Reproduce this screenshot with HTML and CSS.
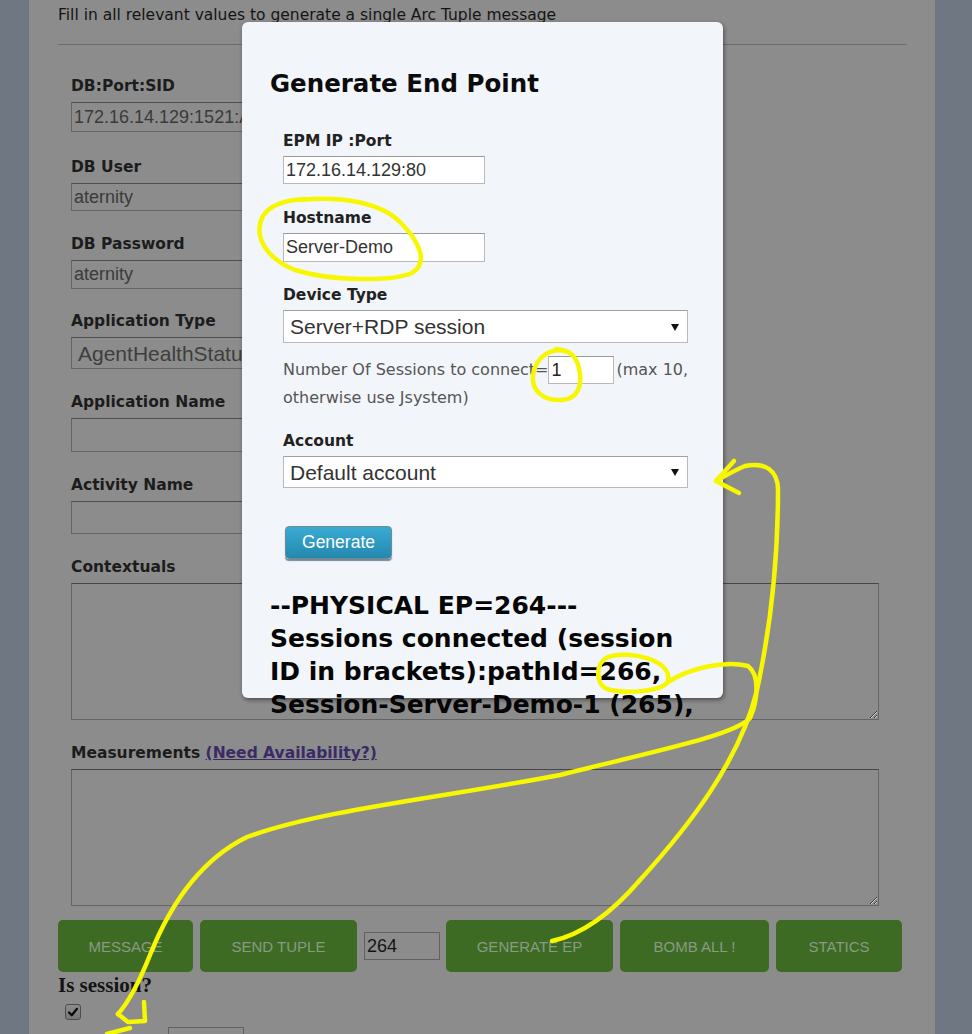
FILE: index.html
```html
<!DOCTYPE html>
<html lang="en">
<head>
<meta charset="utf-8">
<title>Arc Tuple</title>
<link rel="stylesheet" href="styles.css">
</head>
<body>
<div class="page">
  <p class="intro">Fill in all relevant values to generate a single Arc Tuple message</p>
  <hr class="rule">
  <form class="tuple-form">
    <div class="field">
      <label class="field-label">DB:Port:SID</label>
      <input class="text-input" value="172.16.14.129:1521:AGENT">
    </div>
    <div class="field f-user">
      <label class="field-label">DB User</label>
      <input class="text-input h28" value="aternity">
    </div>
    <div class="field">
      <label class="field-label">DB Password</label>
      <input class="text-input h29" value="aternity">
    </div>
    <div class="field f-type">
      <label class="field-label">Application Type</label>
      <select class="page-select"><option>AgentHealthStatus</option></select>
    </div>
    <div class="field">
      <label class="field-label">Application Name</label>
      <input class="text-input h34" value="">
    </div>
    <div class="field">
      <label class="field-label">Activity Name</label>
      <input class="text-input h33" value="">
    </div>
    <div class="field">
      <label class="field-label">Contextuals</label>
      <textarea class="text-area"></textarea>
    </div>
    <div class="field">
      <label class="field-label">Measurements <a class="link" href="#">(Need Availability?)</a></label>
      <textarea class="text-area"></textarea>
    </div>
  </form>
  <div class="actions">
    <button class="act-btn w-message" type="button">Message</button>
    <button class="act-btn w-send" type="button">Send Tuple</button>
    <input class="ep-input" value="264">
    <button class="act-btn w-gen" type="button">Generate EP</button>
    <button class="act-btn w-bomb" type="button">Bomb All !</button>
    <button class="act-btn w-stat" type="button">Statics</button>
  </div>
  <div class="session-label">Is session?</div>
  <span class="checkbox"><svg width="14" height="14" viewBox="0 0 14 14"><path d="M3 7.5 L5.8 10.3 L11 3.8" fill="none" stroke="#0a0a0a" stroke-width="2.2" stroke-linecap="round" stroke-linejoin="round"/></svg></span>
  <input class="session-input" value="">
</div>

<div class="modal">
  <h2 class="modal-title">Generate End Point</h2>
  <div class="modal-form">
    <div class="m-field">
      <label class="m-label">EPM IP :Port</label>
      <input class="m-input" value="172.16.14.129:80">
    </div>
    <div class="m-field">
      <label class="m-label">Hostname</label>
      <input class="m-input m-h29" value="Server-Demo">
    </div>
    <div class="m-field device">
      <label class="m-label">Device Type</label>
      <div class="select-wrap"><select class="m-select m-h33"><option>Server+RDP session</option></select></div>
    </div>
    <p class="sessions">Number Of Sessions to connect=<input class="num-input" value="1">(max 10,<br>otherwise use Jsystem)</p>
    <div class="m-field account">
      <label class="m-label">Account</label>
      <div class="select-wrap"><select class="m-select"><option>Default account</option></select></div>
    </div>
    <button class="gen-btn" type="button">Generate</button>
  </div>
  <div class="result">--PHYSICAL EP=264---<br>Sessions connected (session<br>ID in brackets):pathId=266,<br>Session-Server-Demo-1 (265),</div>
</div>

<svg class="annotations" width="972" height="1034" viewBox="0 0 972 1034">
  <g fill="none" stroke="#f7f700" stroke-width="4.5" stroke-linecap="round" stroke-linejoin="round">
    <path d="M300 200 C340 196 380 202 400 222 C418 240 430 262 412 273 C390 282 330 281 295 270 C265 258 253 235 263 216 C270 205 285 200 305 199"/>
    <path d="M568 352 C552 346 536 356 533 375 C531 392 545 401 562 400 C578 399 583 385 579 368 C576 356 570 350 556 349"/>
    <path d="M668 680 C672 660 630 650 608 657 C595 663 595 684 607 689 C625 694 660 692 668 682 C690 668 725 660 748 666 C760 675 758 700 750 718 C735 735 660 750 560 775 C440 798 320 810 247 837 C200 860 170 905 150 955 C138 985 126 1005 118 1014"/>
    <path d="M118 1014 L128 1022 L145 1021 L144 1002"/>
    <path d="M107 1034 L130 1028"/>
    <path d="M552 941 C580 935 610 915 640 880 C690 825 740 760 757 690 C770 630 778 560 778 490 C778 470 765 462 745 466 C735 470 725 476 716 481"/>
    <path d="M734 461 L716 481 L739 493"/>
  </g>
</svg>
</body>
</html>
```

FILE: styles.css
```css
/* The page behind the dialog is drawn in its dimmed (backdrop) palette. */

html, body {
  margin: 0;
  height: 100%;
  overflow: hidden;
}

body {
  position: relative;
  background: #6f7782;
  font-family: "DejaVu Sans", Verdana, sans-serif;
  color: #1c1c1c;
}

.page {
  margin-left: 29px;
  width: 906px;
  min-height: 1100px;
  box-sizing: border-box;
  padding: 5px 28px 0 29px;
  background: #8c8c8c;
}

.intro {
  margin: 0;
  font-size: 15.5px;
  line-height: 20px;
  color: #141414;
}

.rule {
  height: 0;
  border: 0;
  border-top: 1px solid #6c6c6c;
  margin: 19px 0 31px;
}

.tuple-form {
  display: flex;
  flex-direction: column;
  padding-left: 13px;
}

.field + .field {
  margin-top: 23px;
}

.field.f-user {
  margin-top: 25px;
}

.field.f-type {
  margin-top: 22px;
}

.field-label {
  display: block;
  margin-bottom: 6px;
  font-weight: bold;
  font-size: 15.5px;
  line-height: 20px;
  color: #1c1c1c;
}

.link {
  color: #3a2b65;
  text-decoration: underline;
}

.text-input {
  display: block;
  box-sizing: border-box;
  width: 420px;
  height: 30px;
  padding: 0 2px;
  border: 1px solid #646464;
  border-top-color: #4e4e4e;
  background: #8c8c8c;
  font: 18px "Liberation Sans", Arial, sans-serif;
  color: #3a3a3a;
}

.text-input.h28 { height: 28px; }
.text-input.h29 { height: 29px; }
.text-input.h33 { height: 33px; }
.text-input.h34 { height: 34px; }

.page-select {
  display: block;
  box-sizing: border-box;
  width: 420px;
  height: 32px;
  padding: 0 0 0 6px;
  border: 1px solid #646464;
  border-top-color: #4e4e4e;
  background: #8c8c8c;
  appearance: none;
  -webkit-appearance: none;
  font: 21px "Liberation Sans", Arial, sans-serif;
  color: #3e3e3e;
}

.text-area {
  display: block;
  box-sizing: border-box;
  width: 808px;
  height: 137px;
  margin: 0;
  border: 1px solid #646464;
  border-top-color: #474747;
  background: #8c8c8c;
}

.actions {
  display: flex;
  align-items: center;
  gap: 7px;
  margin-top: 14px;
}

.act-btn {
  height: 52px;
  padding: 0;
  border: 0;
  border-radius: 5px;
  background: #3d6b24;
  color: #8a9a84;
  font: 15px "Liberation Sans", Arial, sans-serif;
  text-transform: uppercase;
}

.w-message { width: 135px; }
.w-send { width: 157px; }
.w-gen { width: 167px; }
.w-bomb { width: 149px; }
.w-stat { width: 126px; }

.ep-input {
  box-sizing: border-box;
  width: 76px;
  height: 28px;
  margin-right: -1px;
  padding: 0 2px;
  border: 1px solid #616161;
  background: #8c8c8c;
  font: 18px "Liberation Sans", Arial, sans-serif;
  color: #141414;
}

.session-label {
  margin-top: 1px;
  font: bold 21px "Liberation Serif", "Times New Roman", serif;
  line-height: 24px;
  color: #141414;
}

.checkbox {
  display: flex;
  align-items: center;
  justify-content: center;
  box-sizing: border-box;
  width: 16px;
  height: 16px;
  margin: 7px 0 0 7px;
  border: 1px solid #4c4c4c;
  border-radius: 3px;
  background: linear-gradient(#8b8b8b, #777);
}

.session-input {
  display: block;
  box-sizing: border-box;
  width: 76px;
  height: 28px;
  margin: 7px 0 0 110px;
  border: 1px solid #616161;
  background: #8c8c8c;
}

.modal {
  position: absolute;
  left: 242px;
  top: 22px;
  width: 481px;
  height: 676px;
  box-sizing: border-box;
  padding: 47px 28px 0;
  border-radius: 6px;
  background: #f2f5f9;
  box-shadow: 1px 2px 4px rgba(0, 0, 0, 0.45);
}

.modal-title {
  margin: 0;
  font-size: 24.5px;
  line-height: 30px;
  font-weight: bold;
  color: #0c0c0c;
}

.modal-form {
  margin-top: 32px;
  padding-left: 13px;
}

.m-field + .m-field {
  margin-top: 24px;
}

.m-field.device {
  margin-top: 23px;
}

.m-label {
  display: block;
  margin-bottom: 5px;
  font-weight: bold;
  font-size: 15.5px;
  line-height: 20px;
  color: #222;
}

.m-input {
  display: block;
  box-sizing: border-box;
  width: 202px;
  height: 28px;
  padding: 0 2px;
  border: 1px solid #b9b9b9;
  border-top-color: #999;
  background: #fff;
  font: 18px "Liberation Sans", Arial, sans-serif;
  color: #333;
}

.m-input.m-h29 { height: 29px; }

.select-wrap {
  position: relative;
  width: 405px;
}

.select-wrap::after {
  content: "";
  position: absolute;
  right: 9px;
  top: 50%;
  margin-top: -3px;
  border-left: 4.5px solid transparent;
  border-right: 4.5px solid transparent;
  border-top: 7px solid #111;
}

.m-select {
  display: block;
  box-sizing: border-box;
  width: 100%;
  height: 32px;
  padding: 0 0 0 6px;
  border: 1px solid #b9b9b9;
  border-top-color: #a0a0a0;
  background: #fff;
  appearance: none;
  -webkit-appearance: none;
  font: 21px "Liberation Sans", Arial, sans-serif;
  color: #333;
}

.m-select.m-h33 { height: 33px; }

.sessions {
  margin: 13px 0 0;
  font-size: 16px;
  line-height: 28px;
  color: #555;
  white-space: nowrap;
}

.num-input {
  box-sizing: border-box;
  width: 66px;
  height: 28px;
  margin-right: 2px;
  padding: 0 2px;
  vertical-align: top;
  border: 1px solid #b9b9b9;
  border-top-color: #999;
  background: #fff;
  font: 18px "Liberation Sans", Arial, sans-serif;
  color: #222;
}

.m-field.account {
  margin-top: 19px;
}

.gen-btn {
  display: block;
  width: 107px;
  height: 33px;
  margin: 38px 0 0 2px;
  border: 1px solid #6f8b98;
  border-radius: 4px;
  background: linear-gradient(#3aabd4, #2488ae);
  box-shadow: 0 2px 1px rgba(30, 70, 90, 0.6);
  color: #fff;
  font: 17.5px "Liberation Sans", Arial, sans-serif;
}

.result {
  margin-top: 30px;
  font-size: 25px;
  line-height: 33px;
  font-weight: bold;
  color: #050505;
  white-space: nowrap;
}

.annotations {
  position: absolute;
  left: 0;
  top: 0;
  pointer-events: none;
}
```
